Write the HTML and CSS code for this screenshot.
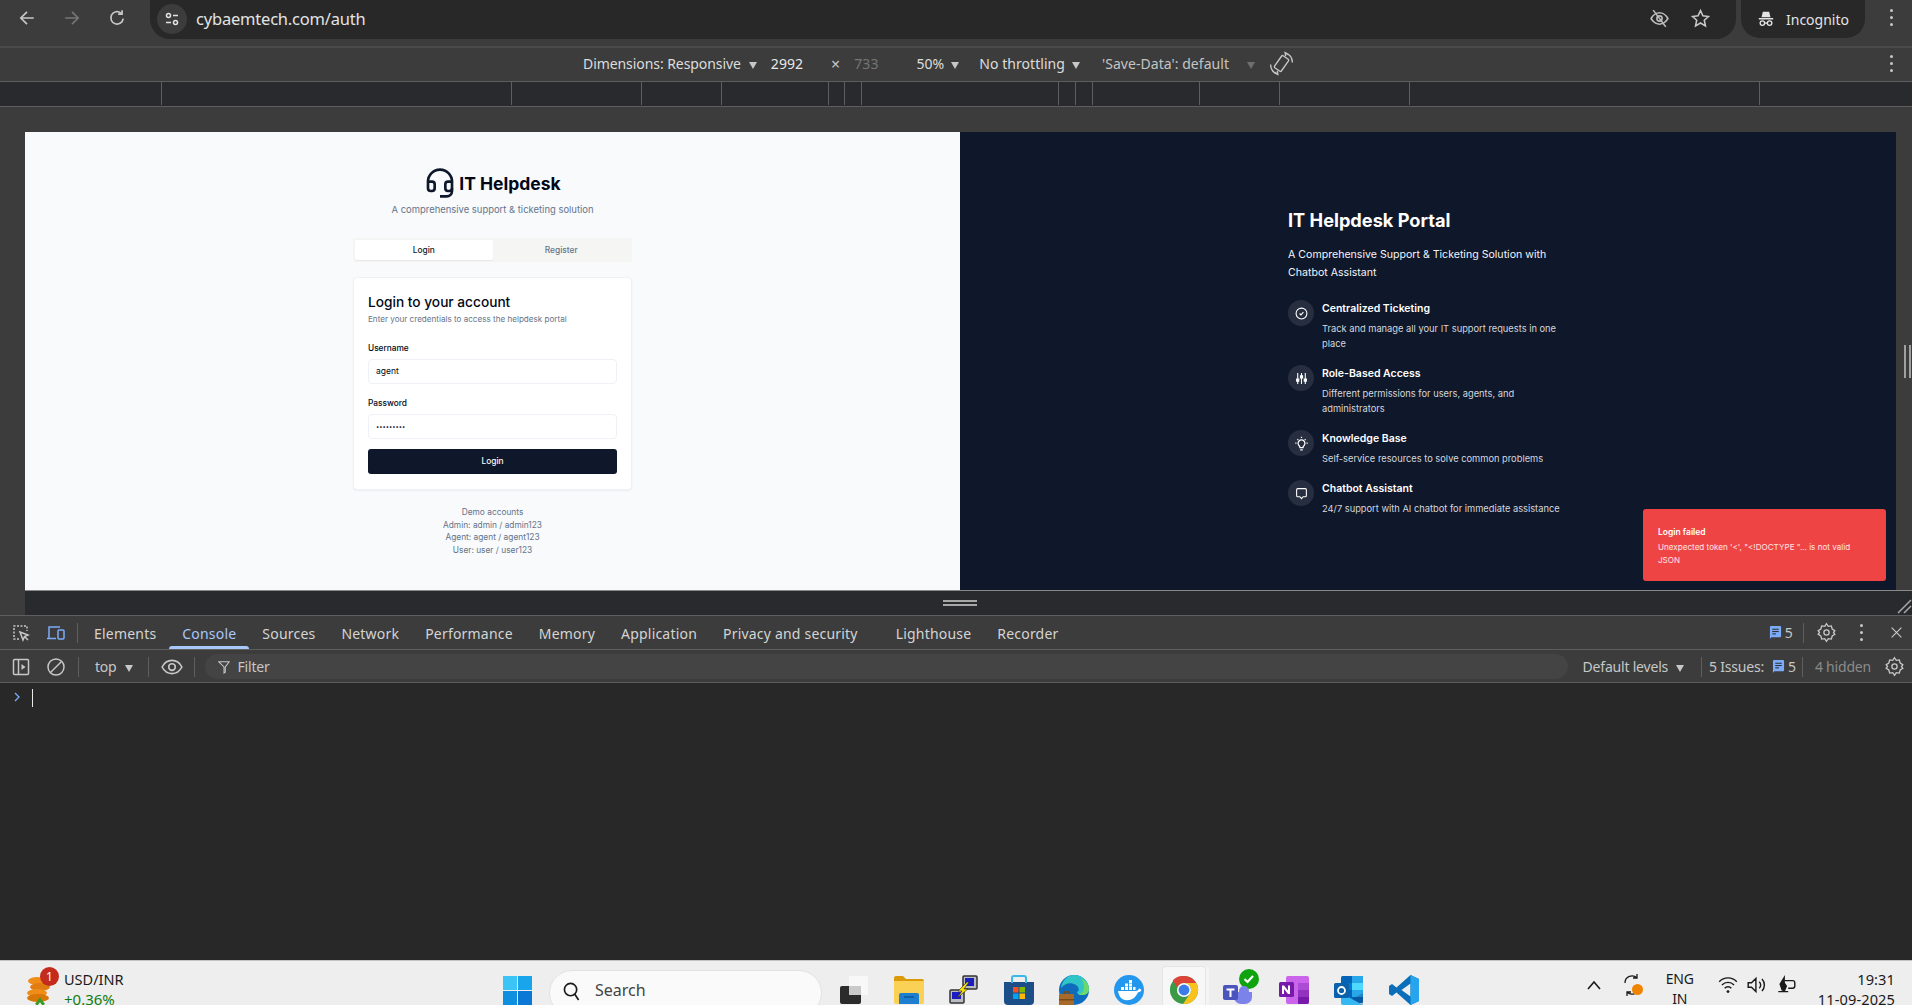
FILE: index.html
```html
<!DOCTYPE html>
<html lang="en">
<head>
    <meta charset="UTF-8">
    <title>IT Helpdesk</title>
    <link rel="stylesheet" href="styles.css">
</head>
<body>
    <!-- browser toolbar -->
    <div class="toolbar">
        <svg class="nav-icon nav-back" viewBox="0 0 16 16"><path d="M14 8H3M8 2.500 2.500 8 8 13.500"/></svg>
        <svg class="nav-icon nav-fwd" viewBox="0 0 16 16"><path d="M2 8h11M8 2.500 13.500 8 8 13.500"/></svg>
        <svg class="nav-icon nav-reload" viewBox="0 0 16 16"><path d="M13.500 8.500A5.500 5.500 0 1 1 11.500 3.600M12.500 1v3.500H9"/></svg>
        <div class="omnibox">
            <span class="site-info">
                <svg viewBox="0 0 16 16"><circle cx="4.500" cy="4.500" r="2"/><path d="M9 4.500h5M2 11.500h5"/><circle cx="11.500" cy="11.500" r="2"/></svg>
            </span>
            <span class="url">cybaemtech.com/auth</span>
            <svg class="omni-icon omni-eye" viewBox="0 0 20 20"><path d="M2 10s3-5.500 8-5.500 8 5.500 8 5.500-3 5.500-8 5.500-8-5.500-8-5.500Z"/><circle cx="10" cy="10" r="2.500"/><path d="M4 2l12 16"/></svg>
            <svg class="omni-icon omni-star" viewBox="0 0 20 20"><path d="m10 2.500 2.300 5 5.200.6-3.900 3.500 1.100 5.400-4.700-2.700-4.700 2.700 1.100-5.400-3.900-3.500 5.200-.6Z"/></svg>
        </div>
        <div class="incognito">
            <svg viewBox="0 0 20 20"><path class="fill" d="M6.500 2h7l1.500 6h-10ZM2 9h16v1.500H2Z"/><circle cx="6" cy="14.500" r="2.500"/><circle cx="14" cy="14.500" r="2.500"/><path d="M8.500 14.500h3"/></svg>
            <span>Incognito</span>
        </div>
        <span class="kebab"><i></i><i></i><i></i></span>
    </div>

    <!-- device mode bar -->
    <div class="device-bar">
        <span class="dev-dim">Dimensions: Responsive<b class="caret"></b></span>
        <span class="dev-w">2992</span>
        <span class="dev-x">×</span>
        <span class="dev-h">733</span>
        <span class="dev-zoom">50%<b class="caret caret-near"></b></span>
        <span class="dev-throttle">No throttling<b class="caret caret-near"></b></span>
        <span class="dev-save">'Save-Data': default<b class="caret caret-off"></b></span>
        <svg class="dev-rotate" viewBox="0 0 24 24"><rect x="8" y="5" width="8" height="14" rx="1" transform="rotate(35 12 12)"/><path d="M1.500 13a10.500 10.500 0 0 0 7 9.500M5.500 20.500l3 2-.5-3.500M22.500 11a10.500 10.500 0 0 0-7-9.500M18.500 3.500l-3-2 .5 3.500"/></svg>
        <span class="kebab kebab-device"><i></i><i></i><i></i></span>
    </div>

    <div class="ruler">
        <span class="seg" style="width:162px"></span>
        <span class="seg" style="width:350px"></span>
        <span class="seg" style="width:130px"></span>
        <span class="seg" style="width:80px"></span>
        <span class="seg" style="width:107px"></span>
        <span class="seg" style="width:16px"></span>
        <span class="seg" style="width:17px"></span>
        <span class="seg" style="width:197px"></span>
        <span class="seg" style="width:17px"></span>
        <span class="seg" style="width:17px"></span>
        <span class="seg" style="width:107px"></span>
        <span class="seg" style="width:80px"></span>
        <span class="seg" style="width:130px"></span>
        <span class="seg" style="width:350px"></span>
    </div>

    <!-- emulated page -->
    <div class="stage">
        <div class="stage-row">
            <main class="page">
                <section class="auth-left">
                    <div class="brand">
                        <svg class="brand-icon" viewBox="0 0 24 24"><path d="M3 11h3a2 2 0 0 1 2 2v3a2 2 0 0 1-2 2H5a2 2 0 0 1-2-2v-5Zm0 0a9 9 0 1 1 18 0m0 0v5a2 2 0 0 1-2 2h-1a2 2 0 0 1-2-2v-3a2 2 0 0 1 2-2h3Z"/><path d="M21 16v2a4 4 0 0 1-4 4h-5"/></svg>
                        <h1>IT Helpdesk</h1>
                    </div>
                    <p class="tagline">A comprehensive support &amp; ticketing solution</p>
                    <div class="tabs">
                        <span class="tab tab-active">Login</span>
                        <span class="tab">Register</span>
                    </div>
                    <form class="card">
                        <h2>Login to your account</h2>
                        <p class="card-sub">Enter your credentials to access the helpdesk portal</p>
                        <label class="field-label">Username</label>
                        <input class="field" type="text" value="agent">
                        <label class="field-label field-label-2">Password</label>
                        <input class="field field-pass" type="password" value="agent1234">
                        <button class="submit" type="button">Login</button>
                    </form>
                    <div class="demo">
                        <p>Demo accounts</p>
                        <p>Admin: admin / admin123</p>
                        <p>Agent: agent / agent123</p>
                        <p>User: user / user123</p>
                    </div>
                </section>
                <section class="auth-right">
                    <div class="portal">
                        <h2>IT Helpdesk Portal</h2>
                        <p class="portal-sub">A Comprehensive Support &amp; Ticketing Solution with Chatbot Assistant</p>
                        <div class="feature">
                            <span class="feature-icon"><svg viewBox="0 0 24 24"><circle cx="12" cy="12" r="10"/><path d="m8.500 12 2.500 2.500 4.500-5"/></svg></span>
                            <div>
                                <h3>Centralized Ticketing</h3>
                                <p>Track and manage all your IT support requests in one place</p>
                            </div>
                        </div>
                        <div class="feature">
                            <span class="feature-icon"><svg viewBox="0 0 24 24"><path d="M5 2v20M12 2v20M19 2v20"/><path class="knob" d="M3 13h4v4H3zM10 7h4v4h-4zM17 13h4v4h-4z"/></svg></span>
                            <div>
                                <h3>Role-Based Access</h3>
                                <p>Different permissions for users, agents, and administrators</p>
                            </div>
                        </div>
                        <div class="feature">
                            <span class="feature-icon"><svg class="icon-bulb" viewBox="0 0 24 24"><path d="M8.500 16a5.500 5.500 0 1 1 7 0c-.8.700-1 1.500-1 2.500h-5c0-1-.2-1.800-1-2.500ZM10 22h4"/><path d="M12 1v2M4 11.500H2M22 11.500h-2M5.500 5l1.300 1.300M18.500 5l-1.300 1.300"/></svg></span>
                            <div>
                                <h3>Knowledge Base</h3>
                                <p>Self-service resources to solve common problems</p>
                            </div>
                        </div>
                        <div class="feature">
                            <span class="feature-icon"><svg viewBox="0 0 24 24"><path d="M3 5a2 2 0 0 1 2-2h14a2 2 0 0 1 2 2v11a2 2 0 0 1-2 2h-4l-3 3.500L9 18H5a2 2 0 0 1-2-2Z"/><path d="M8 10.500h.01M12 10.500h.01M16 10.500h.01"/></svg></span>
                            <div>
                                <h3>Chatbot Assistant</h3>
                                <p>24/7 support with AI chatbot for immediate assistance</p>
                            </div>
                        </div>
                    </div>
                    <div class="toast">
                        <strong>Login failed</strong>
                        <p>Unexpected token '&lt;', "&lt;!DOCTYPE "... is not valid JSON</p>
                    </div>
                </section>
            </main>
            <div class="right-gutter"><span class="grip"></span></div>
        </div>
        <div class="stage-bottom">
            <span class="handle"></span>
            <svg class="corner" viewBox="0 0 16 16"><path d="M2 15 15 2M8 15l7-7"/></svg>
        </div>
    </div>

    <!-- devtools -->
    <div class="dt-tabs">
        <svg class="dt-icon dt-inspect" viewBox="0 0 20 20"><path class="dash" d="M8 16H3V3h13v5"/><path d="m9 9 8 3-3.500 1.500L12 17ZM13.500 13.500 17 17"/></svg>
        <svg class="dt-icon dt-device" viewBox="0 0 20 20"><path d="M3 15V4h11M1 15.500h9"/><rect x="12" y="7" width="6" height="9" rx="1"/></svg>
        <span class="dt-sep"></span>
        <span class="dt-tab dt-tab-first">Elements</span>
        <span class="dt-tab dt-tab-active">Console</span>
        <span class="dt-tab">Sources</span>
        <span class="dt-tab">Network</span>
        <span class="dt-tab">Performance</span>
        <span class="dt-tab">Memory</span>
        <span class="dt-tab">Application</span>
        <span class="dt-tab dt-tab-wide">Privacy and security</span>
        <span class="dt-tab">Lighthouse</span>
        <span class="dt-tab">Recorder</span>
        <span class="dt-right">
            <svg class="msg-icon" viewBox="0 0 14 16"><path d="M2 1h10a1 1 0 0 1 1 1v10a1 1 0 0 1-1 1H2.500L1 15V2a1 1 0 0 1 1-1Z"/><path class="msg-lines" d="M3.500 4.500h7M3.500 7h7M3.500 9.500h4"/></svg>
            <span class="dt-count">5</span>
            <span class="dt-sep"></span>
            <svg class="gear" viewBox="0 0 24 24"><path d="M12 2l2 3 3.500-.5 1 3.500 3 2-1.500 2 1.500 2-3 2-1 3.500L14 19l-2 3-2-3-3.500.5-1-3.500-3-2L4 12l-1.500-2 3-2 1-3.500L10 5Z"/><circle cx="12" cy="12" r="3"/></svg>
            <span class="kebab kebab-dt"><i></i><i></i><i></i></span>
            <svg class="dt-close" viewBox="0 0 16 16"><path d="m2 2 12 12M14 2 2 14"/></svg>
        </span>
    </div>
    <div class="dt-filter">
        <svg class="dt-icon dt-side" viewBox="0 0 20 20"><rect x="2.500" y="2.500" width="15" height="15" rx="1"/><path d="M7.500 2.500v15"/><path class="fill" d="m10.500 7 4 3-4 3Z"/></svg>
        <svg class="dt-icon dt-clear" viewBox="0 0 20 20"><circle cx="10" cy="10" r="8"/><path d="M15.500 4.500l-11 11"/></svg>
        <span class="dt-sep"></span>
        <span class="ctx">top<b class="caret"></b></span>
        <span class="dt-sep"></span>
        <svg class="dt-icon dt-eye" viewBox="0 0 20 20"><path d="M1 10c2-4 5.500-6 9-6s7 2 9 6c-2 4-5.500 6-9 6s-7-2-9-6Z"/><circle cx="10" cy="10" r="3"/></svg>
        <span class="dt-sep"></span>
        <div class="filter-box">
            <svg viewBox="0 0 14 16"><path d="M1 2h12L8.500 8v6L7 15V8Z"/></svg>
            <span>Filter</span>
        </div>
        <span class="levels">Default levels<b class="caret"></b></span>
        <span class="dt-sep"></span>
        <span class="issues">5 Issues:</span>
        <svg class="msg-icon" viewBox="0 0 14 16"><path d="M2 1h10a1 1 0 0 1 1 1v10a1 1 0 0 1-1 1H2.500L1 15V2a1 1 0 0 1 1-1Z"/><path class="msg-lines" d="M3.500 4.500h7M3.500 7h7M3.500 9.500h4"/></svg>
        <span class="issues-n">5</span>
        <span class="dt-sep"></span>
        <span class="hidden-n">4 hidden</span>
        <svg class="gear" viewBox="0 0 24 24"><path d="M12 2l2 3 3.500-.5 1 3.500 3 2-1.500 2 1.500 2-3 2-1 3.500L14 19l-2 3-2-3-3.500.5-1-3.500-3-2L4 12l-1.500-2 3-2 1-3.500L10 5Z"/><circle cx="12" cy="12" r="3"/></svg>
    </div>
    <div class="console">
        <svg class="prompt" viewBox="0 0 8 12"><path d="m2 2 4 4-4 4"/></svg>
        <span class="cursor"></span>
    </div>

    <!-- windows taskbar -->
    <footer class="taskbar">
        <div class="widget">
            <span class="coins">
                <svg viewBox="0 0 26 32"><ellipse cx="11" cy="9" rx="9" ry="4" fill="#f08c18"/><ellipse cx="14" cy="15" rx="10" ry="4" fill="#e07c10"/><ellipse cx="11" cy="21" rx="10" ry="4" fill="#f08c18"/><ellipse cx="12" cy="26" rx="11" ry="4" fill="#d97706"/></svg>
                <span class="badge">1</span>
            </span>
            <div class="widget-text">
                <span>USD/INR</span>
                <span class="up">+0.36%</span>
            </div>
            <svg class="up-arrow" viewBox="0 0 12 10"><path d="M6 0 12 8 9 10 6 6 3 10 0 8Z"/></svg>
        </div>
        <div class="center">
            <svg class="win" viewBox="0 0 29 29"><path fill="#3cc4f7" d="M0 0h14v14H0z"/><path fill="#19a5ec" d="M15 0h14v14H15z"/><path fill="#0f8fe0" d="M0 15h14v14H0z"/><path fill="#0a78d4" d="M15 15h14v14H15z"/></svg>
            <div class="search">
                <svg viewBox="0 0 18 20"><circle cx="8" cy="8" r="6.500"/><path d="m12.500 13 4 6"/></svg>
                <span>Search</span>
            </div>
            <span class="app">
                <svg viewBox="0 0 30 30"><rect x="10" y="1" width="19" height="19" fill="#f8f8f8"/><rect x="1" y="11" width="21" height="18" rx="2" fill="#2b2b2b"/><rect x="10" y="11" width="12" height="9" fill="#c9c9c9"/></svg>
            </span>
            <span class="app">
                <svg viewBox="0 0 30 28"><path fill="#dc9a08" d="M0 2a2 2 0 0 1 2-2h7l3 3h16a2 2 0 0 1 2 2v4H0Z"/><path fill="#fbd155" d="M0 5h30v21a2 2 0 0 1-2 2H2a2 2 0 0 1-2-2Z"/><path fill="#1e7fd0" d="M5 19a2 2 0 0 1 2-2h16a2 2 0 0 1 2 2v9H5Z"/><path stroke="#0b5797" stroke-width="1.500" d="M10 21h10"/></svg>
            </span>
            <span class="app">
                <svg viewBox="0 0 30 30"><rect x="14" y="1" width="14" height="13" rx="1" fill="#b9bdc3" stroke="#333"/><rect x="16" y="3" width="9" height="8" fill="#1a1ec0"/><rect x="1" y="15" width="14" height="13" rx="1" fill="#b9bdc3" stroke="#333"/><rect x="3" y="17" width="9" height="7" fill="#1a1ec0"/><path fill="#f5e00a" stroke="#222" stroke-width=".6" d="M18 7 9 16h4l-5 7 11-9h-4l5-7Z"/></svg>
            </span>
            <span class="app">
                <svg viewBox="0 0 30 30"><path fill="#1c4f88" d="M0 7h30v19a4 4 0 0 1-4 4H4a4 4 0 0 1-4-4Z"/><path fill="none" stroke="#3ab8e6" stroke-width="2" d="M8 8V3a2 2 0 0 1 2-2h10a2 2 0 0 1 2 2v5"/><rect x="9" y="12" width="5.500" height="5.500" fill="#f25022"/><rect x="15.500" y="12" width="5.500" height="5.500" fill="#7fba00"/><rect x="9" y="18.500" width="5.500" height="5.500" fill="#00a4ef"/><rect x="15.500" y="18.500" width="5.500" height="5.500" fill="#ffb900"/></svg>
            </span>
            <span class="app">
                <svg viewBox="0 0 30 30"><circle cx="15" cy="15" r="15" fill="#0f6cbd"/><path fill="#2fc4c8" d="M15 0c8 0 15 6 15 14 0 4-3 6-7 6-3 0-5-1-5-3 3-1 2-5-1-7-5-3-11-2-15 3C3 6 8 0 15 0Z"/><path fill="#6fd86b" d="M22 3c5 3 8 7 8 11 0 4-3 6-7 6-2 0-3-.5-4-1 4 0 6-3 6-7 0-3-1-6-3-9Z"/><path fill="#a86a28" d="M0 20a1 1 0 0 1 1-1h13a1 1 0 0 1 1 1v10H0Z"/><path fill="#7c4a15" d="M0 24h15v1.500H0z"/><path fill="none" stroke="#7c4a15" stroke-width="1.500" d="M5 19v-2h5v2"/></svg>
            </span>
            <span class="app">
                <svg viewBox="0 0 30 30"><circle cx="15" cy="15" r="15" fill="#2396ed"/><path fill="#fff" d="M4 16h18c1.500 0 2.500-1 3-2.500 1.500.3 2 1 2.500 1.800-1 1.500-2 2-3.500 2-2 5-6 8-11 8-5.500 0-8-4-9-9.300Z"/><path fill="#fff" d="M7 12h3v3H7zM11 12h3v3h-3zM15 12h3v3h-3zM11 8.500h3v3h-3zM15 8.500h3v3h-3zM15 5h3v3h-3zM19 12h2.500v3H19z"/></svg>
            </span>
            <span class="app app-active">
                <svg viewBox="0 0 32 32"><circle cx="16" cy="16" r="15" fill="#3c9a46"/><path fill="#dd4437" d="M16 1a15 15 0 0 1 13 7.500H16a7.500 7.500 0 0 0-7 5L4 5.500A15 15 0 0 1 16 1Z"/><path fill="#fbc21b" d="M29 8.500A15 15 0 0 1 15 31l7.500-11.250A7.500 7.500 0 0 0 16 8.500Z"/><circle cx="16" cy="16" r="7.500" fill="#fff"/><circle cx="16" cy="16" r="5.800" fill="#3b7de8"/></svg>
            </span>
            <span class="app app-teams">
                <svg viewBox="0 0 36 36"><circle cx="26" cy="10" r="10" fill="#0fa30f"/><path fill="none" stroke="#fff" stroke-width="2.200" d="m21.500 10 3 3 5.500-6"/><circle cx="21" cy="22" r="5" fill="#7b83eb"/><path fill="#7b83eb" d="M11 23h18v5a7 7 0 0 1-7 7h-4a7 7 0 0 1-7-7Z"/><rect x="0" y="16" width="15" height="15" rx="2" fill="#4b53bc"/><path fill="#fff" d="M3.500 19.500h8v2h-3v6.500h-2v-6.500h-3Z"/></svg>
            </span>
            <span class="app">
                <svg viewBox="0 0 30 30"><rect x="7" y="1" width="23" height="28" rx="2" fill="#ca64ea"/><rect x="19" y="8" width="11" height="7" fill="#ae4bd5"/><rect x="19" y="15" width="11" height="7" fill="#9332bf"/><path fill="#7719aa" d="M19 22h11v5a2 2 0 0 1-2 2h-9Z"/><rect x="0" y="7" width="15" height="15" rx="1.500" fill="#7719aa"/><path fill="#fff" d="M3 10.500h2l4 5v-5h2v8.500H9l-4-5v5H3Z"/></svg>
            </span>
            <span class="app">
                <svg viewBox="0 0 30 30"><rect x="7" y="1" width="22" height="27" rx="1.500" fill="#0364b8"/><rect x="18" y="1" width="11" height="7" fill="#28a8ea"/><rect x="7" y="8" width="11" height="7" fill="#0078d4"/><rect x="18" y="8" width="11" height="7" fill="#50d9ff"/><rect x="18" y="15" width="11" height="7" fill="#28a8ea"/><path fill="#35b8f1" d="M7 18l22 12H9a2 2 0 0 1-2-2Z"/><path fill="#14447d" d="M29 18 18 24l11 6Z" opacity=".35"/><rect x="0" y="8" width="15" height="15" rx="1.500" fill="#0a62ad"/><circle cx="7.500" cy="15.500" r="3.500" fill="none" stroke="#fff" stroke-width="1.800"/></svg>
            </span>
            <span class="app">
                <svg viewBox="0 0 30 30"><path fill="#0a6fb8" fill-rule="evenodd" d="M21.500 0 30 4v22l-8.500 4L7.500 17.500 3 21l-3-2v-8l3-2 4.500 3.500ZM21.500 8.500 12.500 15l9 6.500Z"/><path fill="#26a5ee" d="M21.500 0 30 4v22l-8.500 4v-8.500V8.500Z"/></svg>
            </span>
        </div>
        <div class="tray">
            <svg class="tray-chev" viewBox="0 0 14 10"><path d="m1 9 6-7 6 7"/></svg>
            <span class="tray-sync">
                <svg viewBox="0 0 20 24"><path d="M3 10a7 7 0 0 1 12-5M17 14a7 7 0 0 1-12 5M15 1v4h-4M5 23v-4h4"/></svg>
                <i></i>
            </span>
            <div class="lang"><span>ENG</span><span>IN</span></div>
            <svg class="tray-icon" viewBox="0 0 20 20"><path d="M2 7a11 11 0 0 1 16 0M4.500 10a7.500 7.500 0 0 1 11 0M7 13a4 4 0 0 1 6 0"/><circle class="fill" cx="10" cy="16" r="1.300"/></svg>
            <svg class="tray-icon" viewBox="0 0 20 20"><path d="M2 8v4h3l4 4V4L5 8ZM12 7a4 4 0 0 1 0 6M14.500 4.500a8 8 0 0 1 0 11"/></svg>
            <svg class="tray-icon" viewBox="0 0 20 20"><path class="fill" d="M9 1 4 9l2 6 3 1 2-5-2-3Z"/><path d="M9 6h7a2 2 0 0 1 2 2v3a2 2 0 0 1-2 2h-4M3 16h9"/></svg>
            <div class="clock"><span>19:31</span><span>11-09-2025</span></div>
        </div>
    </footer>
</body>
</html>
```

FILE: styles.css
```css
* {
    box-sizing: border-box;
}
html, body {
    margin: 0;
    height: 1005px;
    overflow: hidden;
}
body {
    font-family: "Noto Sans", Arial, sans-serif;
    background-color: #282828;
    color: #e3e3e3;
}
p, h1, h2, h3 {
    margin: 0;
}
svg {
    display: block;
    flex: none;
    fill: none;
    stroke: currentColor;
    stroke-width: 1.5;
}
.fill {
    fill: currentColor;
    stroke: none;
}

/* browser toolbar */
.toolbar {
    height: 48px;
    background-color: #3c3c3c;
    border-bottom: 2px solid #4a4a4a;
    display: flex;
    align-items: flex-start;
}
.nav-icon {
    width: 18px;
    height: 18px;
    margin-top: 9px;
    color: #c7c7c7;
}
.nav-back {
    margin-left: 18px;
}
.nav-fwd {
    margin-left: 27px;
    color: #757575;
}
.nav-reload {
    margin-left: 27px;
}
.omnibox {
    width: 1586px;
    height: 39px;
    margin-left: 24px;
    background-color: #282828;
    border-radius: 0 0 20px 20px;
    display: flex;
    align-items: center;
    padding: 0 25px 2px 7px;
}
.site-info {
    width: 30px;
    height: 30px;
    border-radius: 50%;
    background-color: #3c3c3c;
    display: flex;
    align-items: center;
    justify-content: center;
}
.site-info svg {
    width: 16px;
    height: 16px;
}
.url {
    margin-left: 9px;
    font-size: 16.500px;
    letter-spacing: -0.2px;
    color: #e3e3e3;
    flex: 1;
}
.omni-icon {
    width: 21px;
    height: 21px;
    color: #c7c7c7;
}
.omni-star {
    margin-left: 20px;
}
.omni-eye {
    color: #bdbdbd;
}
.incognito {
    width: 124px;
    height: 38px;
    margin-left: 5px;
    background-color: #282828;
    border-radius: 0 0 19px 19px;
    display: flex;
    align-items: center;
    padding-left: 16px;
    font-size: 14px;
    gap: 11px;
}
.incognito svg {
    width: 18px;
    height: 20px;
}
.kebab {
    display: flex;
    flex-direction: column;
    gap: 4px;
    width: 4px;
    margin: 9px 0 0 25px;
}
.kebab i {
    width: 3px;
    height: 3px;
    border-radius: 50%;
    background-color: #c7c7c7;
}

/* device bar */
.device-bar {
    height: 34px;
    background-color: #3c3c3c;
    border-bottom: 1px solid #5e5e5e;
    display: flex;
    align-items: center;
    font-size: 14px;
    letter-spacing: 0.05px;
    color: #dcdcdc;
    padding-bottom: 2px;
}
.dev-dim {
    margin-left: 583px;
    letter-spacing: -0.07px;
}
.caret {
    display: inline-block;
    width: 0;
    height: 0;
    border-left: 4.500px solid transparent;
    border-right: 4.500px solid transparent;
    border-top: 7px solid #c7c7c7;
    margin-left: 8px;
}
.caret-near {
    margin-left: 7px;
}
.caret-off {
    border-top-color: #6f6f6f;
    margin-left: 18px;
}
.dev-w {
    margin-left: 14px;
    color: #e8e8e8;
}
.dev-x {
    margin-left: 28px;
    font-size: 16px;
    color: #c7c7c7;
}
.dev-h {
    margin-left: 14px;
    color: #757575;
}
.dev-zoom {
    margin-left: 38px;
}
.dev-throttle {
    margin-left: 20px;
}
.dev-save {
    margin-left: 22px;
    color: #c4c4c4;
}
.dev-rotate {
    width: 25px;
    height: 25px;
    margin-left: 14px;
    color: #c7c7c7;
    stroke-width: 1.300;
}
.kebab-device {
    margin: 0 18px 0 auto;
}

.ruler {
    height: 25px;
    background-color: #292a2d;
    border-bottom: 1px solid #5e5e5e;
    display: flex;
}
.seg {
    height: 23px;
    border-right: 1px solid #5e5e5e;
}

/* emulated page frame */
.stage {
    height: 509px;
    background-color: #3c3c3c;
    padding: 25px 0 0 25px;
    display: flex;
    flex-direction: column;
    border-bottom: 1px solid #5e5e5e;
}
.stage-row {
    display: flex;
    height: 458px;
}
.page {
    width: 1871px;
    display: flex;
    font-family: Inter, "Liberation Sans", sans-serif;
    position: relative;
}
.right-gutter {
    flex: 1;
    display: flex;
    align-items: center;
    justify-content: flex-end;
    padding-right: 1px;
}
.grip {
    width: 7px;
    height: 33px;
    border-left: 2px solid #a0a0a0;
    border-right: 2px solid #a0a0a0;
}
.stage-bottom {
    flex: 1;
    background-color: #292a2d;
    border-top: 1px solid #8a8a8a;
    display: flex;
    align-items: center;
    justify-content: center;
    position: relative;
}
.handle {
    width: 34px;
    height: 6px;
    border-top: 2px solid #a8a8a8;
    border-bottom: 2px solid #a8a8a8;
    margin-left: -17px;
}
.corner {
    position: absolute;
    right: 0;
    top: 7px;
    width: 16px;
    height: 16px;
    color: #a8a8a8;
}

/* login column */
.auth-left {
    width: 935px;
    background-color: #f8fafc;
    color: #0f172a;
    display: flex;
    flex-direction: column;
    align-items: center;
    justify-content: center;
}
.brand {
    display: flex;
    align-items: center;
    gap: 3px;
    height: 34px;
}
.brand-icon {
    width: 32px;
    height: 32px;
    stroke-width: 2;
    color: #0f172a;
}
.brand h1 {
    font-size: 17.500px;
    font-weight: 700;
    color: #020817;
}
.tagline {
    font-size: 9.450px;
    color: #64748b;
    margin-top: 3px;
    line-height: 14px;
}
.tabs {
    width: 279px;
    height: 24px;
    margin-top: 21px;
    background-color: #f5f5f4;
    border-radius: 3px;
    padding: 2px;
    display: flex;
    font-size: 8.400px;
    font-weight: 500;
}
.tab {
    flex: 1;
    display: flex;
    align-items: center;
    justify-content: center;
    border-radius: 2px;
    color: #64748b;
}
.tab-active {
    background-color: #fff;
    color: #0f172a;
    box-shadow: 0 1px 1px rgba(0, 0, 0, 0.06);
}
.card {
    width: 279px;
    height: 213px;
    margin-top: 15px;
    background-color: #fff;
    border: 1px solid #eef1f5;
    border-radius: 4px;
    box-shadow: 0 1px 2px rgba(0, 0, 0, 0.05);
    padding: 15px 14px;
    display: flex;
    flex-direction: column;
}
.card h2 {
    font-size: 13.700px;
    font-weight: 500;
    line-height: 18px;
    color: #020817;
}
.card-sub {
    font-size: 8.100px;
    line-height: 12px;
    margin-top: 2px;
    color: #64748b;
}
.field-label {
    font-size: 8.300px;
    font-weight: 500;
    line-height: 12px;
    margin-top: 17px;
    color: #020817;
}
.field-label-2 {
    margin-top: 13px;
}
.field {
    height: 25.500px;
    margin-top: 5px;
    border: 1px solid #eef1f5;
    border-radius: 4px;
    padding: 0 7px;
    font-family: Inter, sans-serif;
    font-size: 8.500px;
    color: #020817;
    outline: none;
    background-color: #fff;
}
.field-pass {
    font-size: 5.800px;
}
.submit {
    height: 26px;
    margin-top: 10px;
    border: none;
    border-radius: 3px;
    background-color: #0f172a;
    color: #f8fafc;
    font-family: Inter, sans-serif;
    font-size: 8.400px;
    font-weight: 500;
}
.demo {
    margin-top: 16px;
    text-align: center;
    font-size: 8.350px;
    line-height: 12.500px;
    color: #64748b;
}

/* portal column */
.auth-right {
    width: 936px;
    background-color: #0f172a;
    color: #fff;
    display: flex;
    align-items: center;
    justify-content: center;
}
.portal {
    width: 280px;
}
.portal h2 {
    font-size: 18.200px;
    font-weight: 700;
    line-height: 28px;
}
.portal-sub {
    font-size: 10.600px;
    line-height: 18px;
    margin-top: 12px;
    color: #f1f5f9;
}
.feature {
    display: flex;
    gap: 8px;
    margin-top: 14px;
}
.portal-sub + .feature {
    margin-top: 18px;
}
.feature-icon {
    width: 26px;
    height: 26px;
    border-radius: 50%;
    background-color: #272e3f;
    display: flex;
    align-items: center;
    justify-content: center;
    flex: none;
    color: #fff;
}
.feature-icon svg {
    width: 13px;
    height: 13px;
    stroke-width: 2;
}
.feature-icon .icon-bulb {
    width: 15px;
    height: 15px;
}
.knob {
    fill: #fff;
}
.feature h3 {
    font-size: 10.500px;
    font-weight: 600;
    line-height: 17px;
}
.feature p {
    font-size: 9.300px;
    line-height: 15px;
    margin-top: 4px;
    color: #d4d8de;
}
.toast {
    position: absolute;
    right: 10px;
    bottom: 9px;
    width: 243px;
    height: 72px;
    background-color: #ef4444;
    border-radius: 3px;
    padding: 17px 15px 0;
    color: #fff;
    font-size: 8.100px;
}
.toast strong {
    font-weight: 600;
    font-size: 8.500px;
    display: block;
    line-height: 12px;
}
.toast p {
    margin-top: 3px;
    line-height: 13px;
    color: #fde4e4;
}

/* devtools */
.dt-tabs {
    height: 34px;
    background-color: #3c3c3c;
    border-bottom: 1px solid #5e5e5e;
    display: flex;
    align-items: center;
    font-size: 14px;
    letter-spacing: 0.2px;
    color: #d4d4d4;
}
.dt-icon {
    width: 20px;
    height: 20px;
    color: #c7c7c7;
}
.dt-inspect {
    margin-left: 11px;
}
.dash {
    stroke-dasharray: 2 1.500;
}
.dt-device {
    margin-left: 15px;
    color: #7cacf8;
}
.dt-sep {
    width: 1px;
    height: 20px;
    background-color: #5e5e5e;
    flex: none;
}
.dt-tabs > .dt-sep {
    margin-left: 11px;
}
.dt-tab {
    padding: 2px 13px 0;
    height: 33px;
    line-height: 31px;
    white-space: nowrap;
}
.dt-tab-first {
    margin-left: 3px;
}
.dt-tab-active {
    color: #a8c7fa;
    position: relative;
}
.dt-tab-active::after {
    content: "";
    position: absolute;
    left: 0;
    right: 0;
    bottom: 0;
    height: 3px;
    border-radius: 3px 3px 0 0;
    background-color: #a8c7fa;
}
.dt-tab-wide {
    margin-right: 12px;
}
.dt-right {
    margin-left: auto;
    display: flex;
    align-items: center;
    padding-right: 9px;
}
.msg-icon {
    width: 13px;
    height: 15px;
    fill: #7cacf8;
    stroke: none;
}
.msg-lines {
    stroke: #1f1f1f;
    stroke-width: 1;
    fill: none;
}
.dt-count {
    margin: 0 10px 0 3px;
    color: #c7c7c7;
}
.gear {
    width: 21px;
    height: 21px;
    color: #c7c7c7;
}
.dt-right .gear {
    margin-left: 12px;
}
.kebab-dt {
    margin: 0 0 0 23px;
}
.dt-close {
    width: 13px;
    height: 13px;
    margin-left: 26px;
    color: #c7c7c7;
}
.dt-filter {
    height: 33px;
    background-color: #3c3c3c;
    border-bottom: 1px solid #5e5e5e;
    display: flex;
    align-items: center;
    font-size: 14px;
    letter-spacing: -0.2px;
    color: #c7c7c7;
    padding-top: 1px;
}
.dt-side {
    margin-left: 11px;
}
.dt-clear {
    margin-left: 15px;
}
.dt-filter > .dt-sep {
    margin-left: 12px;
}
.ctx {
    margin-left: 16px;
    margin-right: 3px;
}
.dt-eye {
    margin-left: 12px;
    width: 22px;
    height: 22px;
}
.dt-filter > .dt-eye + .dt-sep {
    margin-left: 11px;
}
.filter-box {
    width: 1363px;
    height: 25px;
    margin-left: 10px;
    border-radius: 13px;
    background-color: #444;
    display: flex;
    align-items: center;
    padding-left: 13px;
    gap: 8px;
    flex: none;
}
.filter-box svg {
    width: 12px;
    height: 14px;
    stroke-width: 1.200;
}
.levels {
    margin-left: 15px;
}
.dt-filter > .levels + .dt-sep {
    margin-left: 17px;
}
.issues {
    margin-left: 7px;
}
.dt-filter .msg-icon {
    margin-left: 8px;
}
.issues-n {
    margin-left: 3px;
}
.dt-filter > .issues-n + .dt-sep {
    margin-left: 6px;
}
.hidden-n {
    margin-left: 12px;
    color: #8b8b8b;
}
.dt-filter .gear {
    margin-left: 13px;
}
.console {
    height: 277px;
    background-color: #282828;
    padding: 5px 0 0 13px;
    display: flex;
    align-items: flex-start;
}
.prompt {
    width: 8px;
    height: 12px;
    margin-top: 3px;
    color: #7cacf8;
    stroke-width: 1.300;
}
.cursor {
    width: 1px;
    height: 18px;
    margin: 1px 0 0 11px;
    background-color: #e8e8e8;
}

/* taskbar */
.taskbar {
    height: 46px;
    background-color: #eeeeee;
    border-top: 1px solid #c4c4c4;
    color: #1a1a1a;
    display: flex;
}
.widget {
    width: 491px;
    padding-left: 26px;
    display: flex;
    position: relative;
}
.coins {
    position: relative;
    width: 26px;
    height: 32px;
    margin-top: 11px;
}
.coins svg {
    width: 26px;
    height: 32px;
    stroke: none;
}
.badge {
    position: absolute;
    left: 14px;
    top: -5px;
    width: 19px;
    height: 19px;
    border-radius: 50%;
    background-color: #c42b1c;
    color: #fff;
    font-size: 12px;
    line-height: 19px;
    text-align: center;
}
.widget-text {
    display: flex;
    flex-direction: column;
    margin-left: 12px;
    font-size: 14.500px;
    line-height: 20px;
    margin-top: 8px;
}
.up {
    color: #107c10;
    font-size: 15px;
}
.up-arrow {
    position: absolute;
    left: 35px;
    top: 36px;
    width: 10px;
    height: 9px;
    fill: #3a9a28;
    stroke: none;
}
.center {
    display: flex;
    align-items: flex-start;
}
.win {
    width: 29px;
    height: 29px;
    margin: 15px 17px 0 12px;
    stroke: none;
}
.search {
    width: 273px;
    height: 46px;
    margin-top: 9px;
    margin-right: 4px;
    background-color: #fafafa;
    border: 1px solid #e2e2e2;
    border-radius: 23px;
    display: flex;
    align-items: flex-start;
    padding: 8px 0 0 13px;
    gap: 15px;
    font-size: 16px;
    color: #444;
}
.search svg {
    width: 17px;
    height: 19px;
    margin-top: 3px;
    color: #1a1a1a;
    stroke-width: 1.800;
}
.app {
    width: 55.100px;
    height: 45px;
    padding-top: 14px;
    display: flex;
    justify-content: center;
}
.app svg {
    width: 30px;
    height: 30px;
    stroke: none;
}
.app-active {
    background-color: #f7f7f7;
    border: 1px solid #e6e6e6;
    border-bottom: none;
    border-radius: 4px 4px 0 0;
    width: 44px;
    margin: 5px 5.500px 0;
    padding-top: 8px;
    box-shadow: 4px 0 0 -1px #f4f4f4;
}
.app-teams {
    padding-top: 8px;
    padding-left: 4px;
}
.app-teams svg {
    width: 36px;
    height: 36px;
}
.tray {
    margin-left: auto;
    display: flex;
    align-items: flex-start;
    padding-right: 17px;
    font-size: 14px;
}
.tray-chev {
    width: 14px;
    height: 10px;
    margin-top: 19px;
    stroke-width: 1.600;
}
.tray-sync {
    position: relative;
    width: 20px;
    height: 24px;
    margin: 12px 0 0 21px;
}
.tray-sync svg {
    width: 20px;
    height: 24px;
    stroke-width: 1.300;
}
.tray-sync i {
    position: absolute;
    right: -1px;
    bottom: 2px;
    width: 11px;
    height: 11px;
    border-radius: 50%;
    background-color: #f08400;
}
.lang {
    display: flex;
    flex-direction: column;
    align-items: center;
    margin: 8px 0 0 24px;
    line-height: 20px;
    letter-spacing: -0.2px;
}
.tray-icon {
    width: 22px;
    height: 22px;
    margin: 13px 0 0 7px;
    stroke-width: 1.300;
}
.lang + .tray-icon {
    margin-left: 23px;
}
.clock {
    display: flex;
    flex-direction: column;
    align-items: flex-end;
    margin: 8px 0 0 21px;
    line-height: 20px;
    font-size: 14.600px;
    letter-spacing: 0.1px;
}
```
